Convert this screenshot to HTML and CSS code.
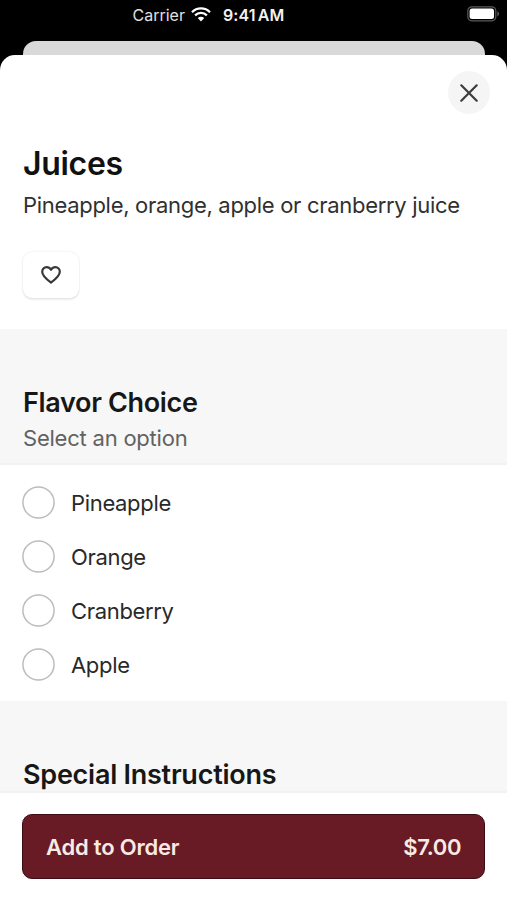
FILE: index.html
```html
<!DOCTYPE html>
<html lang="en">
<head>
<meta charset="utf-8">
<meta name="viewport" content="width=device-width, initial-scale=1">
<title>Juices</title>
<link rel="stylesheet" href="styles.css">
</head>
<body>
<div class="phone">
  <header class="status">
    <div class="status-main">
      <span class="carrier">Carrier</span>
      <svg class="wifi" viewBox="0 0 20 15" width="20" height="15" aria-hidden="true">
        <path d="M1 5.2a12.7 12.7 0 0 1 18 0M4.1 8.4a8.3 8.3 0 0 1 11.8 0" fill="none" stroke="#fff" stroke-width="2.3"/>
        <path d="M6.8 11.1a4.5 4.5 0 0 1 6.4 0L10 14.5z" fill="#fff"/>
      </svg>
      <span class="time">9:41 AM</span>
    </div>
    <svg class="battery" viewBox="0 0 33 16" width="33" height="16" aria-hidden="true">
      <rect x=".8" y=".8" width="28" height="14" rx="4" fill="none" stroke="#5b5b5b" stroke-width="1.2"/>
      <rect x="2.6" y="2.5" width="24.4" height="10.6" rx="2.5" fill="#fff"/>
      <path d="M30.3 5.2q1.8.8 1.8 2.6t-1.8 2.6z" fill="#5b5b5b"/>
    </svg>
  </header>
  <div class="back-card"></div>
  <main class="sheet">
    <div class="toolbar">
      <button class="close" aria-label="Close">
        <svg viewBox="0 0 18 18" width="18" height="18"><path d="M1.3 1.3l15.4 15.4M16.7 1.3L1.3 16.7" stroke="#3c3c3c" stroke-width="2.2" stroke-linecap="round"/></svg>
      </button>
    </div>
    <section class="intro">
      <h1>Juices</h1>
      <p class="description">Pineapple, orange, apple or cranberry juice</p>
      <button class="favorite" aria-label="Favorite">
        <svg viewBox="0 0 22 20" width="22" height="20"><path d="M11 17.6C7.2 14.8 2.2 11.2 2.2 6.8c0-2.7 1.9-4.7 4.4-4.7 1.9 0 3.4 1 4.4 2.7 1-1.7 2.5-2.7 4.4-2.7 2.5 0 4.4 2 4.4 4.7 0 4.4-5 8-8.8 10.8z" fill="none" stroke="#383838" stroke-width="2.2" stroke-linejoin="round"/></svg>
      </button>
    </section>
    <section class="group-head">
      <h2>Flavor Choice</h2>
      <p>Select an option</p>
    </section>
    <ul class="options">
      <li><svg class="radio" viewBox="0 0 33 33"><circle cx="16.5" cy="16.5" r="15.6"/></svg><span>Pineapple</span></li>
      <li><svg class="radio" viewBox="0 0 33 33"><circle cx="16.5" cy="16.5" r="15.6"/></svg><span>Orange</span></li>
      <li><svg class="radio" viewBox="0 0 33 33"><circle cx="16.5" cy="16.5" r="15.6"/></svg><span>Cranberry</span></li>
      <li><svg class="radio" viewBox="0 0 33 33"><circle cx="16.5" cy="16.5" r="15.6"/></svg><span>Apple</span></li>
    </ul>
    <section class="group-head special">
      <h2>Special Instructions</h2>
    </section>
    <footer class="order-bar">
      <button class="order"><span>Add to Order</span><span class="price">$7.00</span></button>
    </footer>
  </main>
</div>
</body>
</html>
```
FILE: styles.css
```css
* { box-sizing: border-box; }
body { margin: 0; background: #000; font-family: Inter, "Liberation Sans", sans-serif; color: #1c1c1c; }
h1, h2, p, ul { margin: 0; padding: 0; }
button { border: 0; padding: 0; font: inherit; }
svg { display: block; }
.phone { width: 507px; height: 900px; overflow: hidden; display: flex; flex-direction: column; background: #000; }
.status { height: 41px; flex: none; display: flex; justify-content: space-between; align-items: flex-start; padding: 6px 7px 0 132px; color: #e0e0e0; font-size: 16px; line-height: 18px; }
.status-main { display: flex; }
.carrier { width: 59px; padding-left: .5px; }
.time { margin-left: 12px; font-weight: 600; color: #f2f2f2; word-spacing: -2px; letter-spacing: .1px; white-space: nowrap; }
.wifi { margin-top: 1px; }
.back-card { height: 14px; flex: none; margin: 0 22px 0 23px; background: #d9d9d9; border-radius: 13px 13px 0 0; }
.sheet { flex: 1; display: flex; flex-direction: column; background: #fff; border-radius: 15px 15px 0 0; overflow: hidden; }
.toolbar { height: 61px; flex: none; display: flex; justify-content: flex-end; padding: 16px 17px 0 0; }
.close { width: 42px; height: 43px; border-radius: 50%; background: #f5f5f5; display: flex; align-items: center; justify-content: center; }
.intro { height: 213px; flex: none; padding: 28px 23px 0; }
h1 { font-size: 32px; line-height: 40px; font-weight: 600; letter-spacing: -.3px; color: #111; }
.description { margin-top: 7px; font-size: 22px; line-height: 28px; letter-spacing: -.3px; color: #303030; white-space: nowrap; }
.favorite { margin-top: 33px; width: 56px; height: 46px; border-radius: 9px; background: #fff; box-shadow: 0 0 2px rgba(0,0,0,.12), 0 2px 2px rgba(0,0,0,.07); display: flex; align-items: center; justify-content: center; }
.group-head { height: 136px; flex: none; padding: 57px 23px 0; background: #f7f7f7; border-bottom: 2px solid #f2f2f2; }
h2 { font-size: 27px; line-height: 34px; font-weight: 600; letter-spacing: -.33px; color: #171717; white-space: nowrap; }
.group-head p { margin-top: 4px; font-size: 22px; line-height: 28px; letter-spacing: -.22px; color: #626262; }
.options { height: 236px; flex: none; padding: 10px 22px 0; list-style: none; }
.options li { height: 54px; display: flex; align-items: center; gap: 16px; font-size: 22px; letter-spacing: -.33px; color: #292929; }
.options span { padding-top: 2px; }
.radio { width: 33px; height: 33px; fill: none; stroke: #bcbcbc; stroke-width: 1.5px; }
.special { height: 92px; }
.special h2 { letter-spacing: -.25px; }
.order-bar { flex: 1; padding: 21px 22px 0; background: #fff; }
.order { width: 463px; height: 65px; border: 1px solid #3d0b14; border-radius: 10px; padding: 1px 23px 0; display: flex; align-items: center; justify-content: space-between; background: #681b24; color: #f8eae5; font-size: 22px; font-weight: 600; letter-spacing: -.2px; }
.price { letter-spacing: -.4px; }
```
